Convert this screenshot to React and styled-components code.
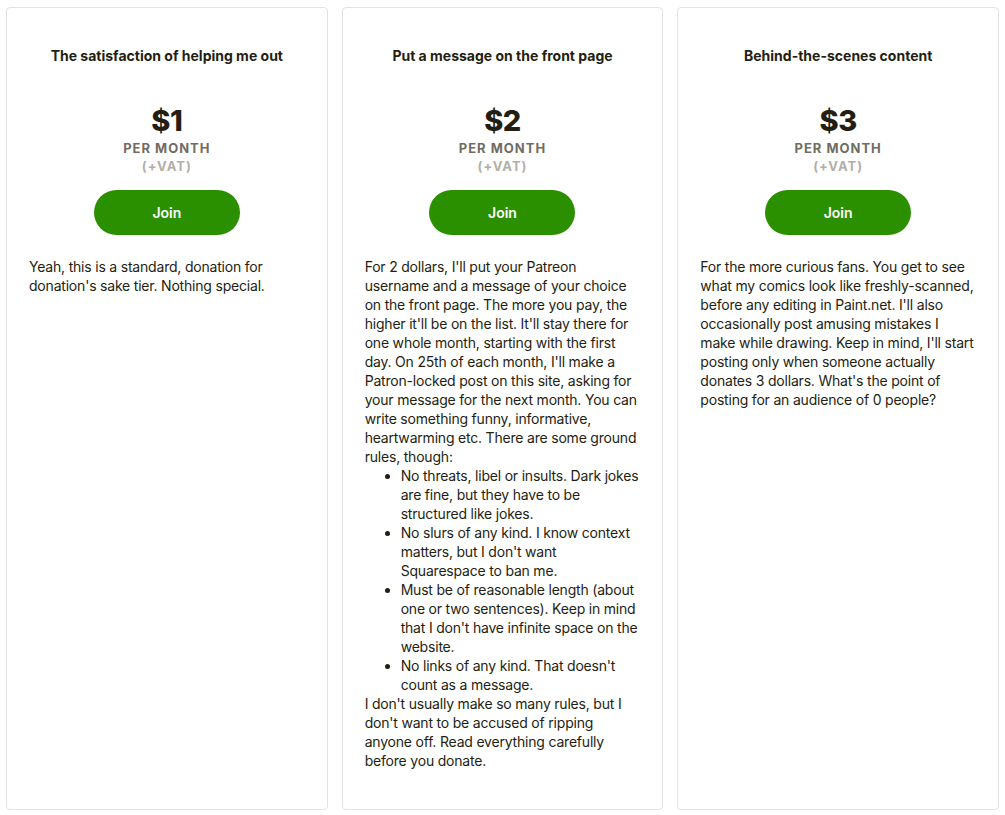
import React from "react";
import styled, { createGlobalStyle } from "styled-components";

const Global = createGlobalStyle`
  html, body { margin: 0; padding: 0; background: #ffffff; }
  body { font-family: Inter, "Noto Sans", Arial, sans-serif; -webkit-font-smoothing: antialiased; }
  * { box-sizing: border-box; }
`;

const Grid = styled.div`
  display: grid;
  grid-template-columns: repeat(3, 1fr);
  gap: 14px;
  padding: 7px 6px 6px 6px;
  width: 1005px;
`;

const Card = styled.div`
  height: 803px;
  border: 1px solid #e5e3dd;
  border-radius: 4px;
  background: #fff;
  padding: 38px 22px 22px 22px;
  display: flex;
  flex-direction: column;
  color: #241e12;
`;

const Title = styled.h3`
  margin: 0;
  font-size: 14px;
  line-height: 20px;
  font-weight: 700;
  text-align: center;
  color: #241e12;
`;

const Price = styled.div`
  margin-top: 37px;
  font-size: 29px;
  line-height: 36px;
  font-weight: 800;
  text-align: center;
  letter-spacing: -0.5px;
  color: #241e12;
`;

const Period = styled.div`
  font-size: 13px;
  line-height: 18px;
  font-weight: 700;
  letter-spacing: 1px;
  text-align: center;
  color: ${(p) => (p.$muted ? "#b3afa8" : "#706c64")};
`;

const JoinButton = styled.button`
  align-self: center;
  margin-top: 15px;
  width: 146px;
  height: 45px;
  border: none;
  border-radius: 23px;
  background: #2a9000;
  color: #fff;
  font-family: inherit;
  font-size: 14px;
  font-weight: 600;
  cursor: pointer;
`;

const Body = styled.div`
  margin-top: 22px;
  font-size: 14px;
  line-height: 19px;
  letter-spacing: -0.2px;
  color: #241e12;
  p { margin: 0; }
`;

const List = styled.ul`
  margin: 0;
  padding-left: 36px;
  li { padding-left: 0; }
`;

const tiers = [
  {
    title: "The satisfaction of helping me out",
    price: "$1",
    body: (
      <p>Yeah, this is a standard, donation for donation's sake tier. Nothing special.</p>
    ),
  },
  {
    title: "Put a message on the front page",
    price: "$2",
    body: (
      <>
        <p>
          For 2 dollars, I'll put your Patreon username and a message of your choice on the front page. The more you pay, the higher it'll be on the list. It'll stay there for one whole month, starting with the first day. On 25th of each month, I'll make a Patron-locked post on this site, asking for your message for the next month. You can write something funny, informative, heartwarming etc. There are some ground rules, though:
        </p>
        <List>
          <li>No threats, libel or insults. Dark jokes are fine, but they have to be structured like jokes.</li>
          <li>No slurs of any kind. I know context matters, but I don't want Squarespace to ban me.</li>
          <li>Must be of reasonable length (about one or two sentences). Keep in mind that I don't have infinite space on the website.</li>
          <li>No links of any kind. That doesn't count as a message.</li>
        </List>
        <p>I don't usually make so many rules, but I don't want to be accused of ripping anyone off. Read everything carefully before you donate.</p>
      </>
    ),
  },
  {
    title: "Behind-the-scenes content",
    price: "$3",
    body: (
      <p>
        For the more curious fans. You get to see what my comics look like freshly-scanned, before any editing in Paint.net. I'll also occasionally post amusing mistakes I make while drawing. Keep in mind, I'll start posting only when someone actually donates 3 dollars. What's the point of posting for an audience of 0 people?
      </p>
    ),
  },
];

export default function App() {
  return (
    <>
      <Global />
      <Grid>
        {tiers.map((t) => (
          <Card key={t.price}>
            <Title>{t.title}</Title>
            <Price>{t.price}</Price>
            <Period>PER MONTH</Period>
            <Period $muted>(+VAT)</Period>
            <JoinButton>Join</JoinButton>
            <Body>{t.body}</Body>
          </Card>
        ))}
      </Grid>
    </>
  );
}
